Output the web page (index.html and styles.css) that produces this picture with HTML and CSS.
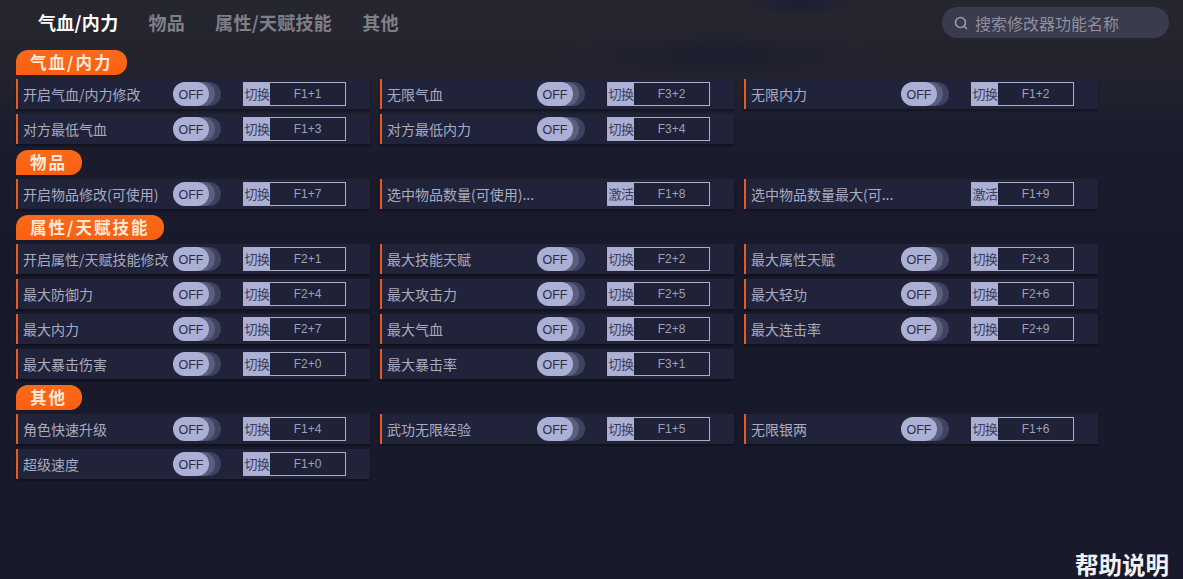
FILE: index.html
```html
<!DOCTYPE html>
<html lang="en">
<head>
    <meta charset="UTF-8">
    <title>修改器</title>
    <link rel="stylesheet" href="styles.css">
</head>
<body>
    <div class="backdrop"></div>

    <div class="topbar">
        <div class="tabs">
            <div class="tab active">气血/内力</div>
            <div class="tab">物品</div>
            <div class="tab">属性/天赋技能</div>
            <div class="tab">其他</div>
        </div>
        <div class="search">
            <svg class="search-icon" width="16" height="16" viewBox="0 0 16 16">
                <circle cx="7.5" cy="7.5" r="5" fill="none" stroke="#9a9cab" stroke-width="1.6"/>
                <path d="M11.2 11.2L13.5 13.5" stroke="#9a9cab" stroke-width="1.6" stroke-linecap="round"/>
            </svg>
            <span>搜索修改器功能名称</span>
        </div>
    </div>

    <div class="content">
        <div class="section-title">气血/内力</div>
        <div class="grid">
            <div class="row"><span class="name">开启气血/内力修改</span><div class="toggle"><div class="knob">OFF</div></div><div class="key"><span class="key-type">切换</span><span class="key-value">F1+1</span></div></div>
            <div class="row"><span class="name">无限气血</span><div class="toggle"><div class="knob">OFF</div></div><div class="key"><span class="key-type">切换</span><span class="key-value">F3+2</span></div></div>
            <div class="row"><span class="name">无限内力</span><div class="toggle"><div class="knob">OFF</div></div><div class="key"><span class="key-type">切换</span><span class="key-value">F1+2</span></div></div>
            <div class="row"><span class="name">对方最低气血</span><div class="toggle"><div class="knob">OFF</div></div><div class="key"><span class="key-type">切换</span><span class="key-value">F1+3</span></div></div>
            <div class="row"><span class="name">对方最低内力</span><div class="toggle"><div class="knob">OFF</div></div><div class="key"><span class="key-type">切换</span><span class="key-value">F3+4</span></div></div>
        </div>

        <div class="section-title">物品</div>
        <div class="grid">
            <div class="row"><span class="name">开启物品修改(可使用)</span><div class="toggle"><div class="knob">OFF</div></div><div class="key"><span class="key-type">切换</span><span class="key-value">F1+7</span></div></div>
            <div class="row"><span class="name wide">选中物品数量(可使用)...</span><div class="key"><span class="key-type">激活</span><span class="key-value">F1+8</span></div></div>
            <div class="row"><span class="name wide">选中物品数量最大(可...</span><div class="key"><span class="key-type">激活</span><span class="key-value">F1+9</span></div></div>
        </div>

        <div class="section-title">属性/天赋技能</div>
        <div class="grid">
            <div class="row"><span class="name">开启属性/天赋技能修改</span><div class="toggle"><div class="knob">OFF</div></div><div class="key"><span class="key-type">切换</span><span class="key-value">F2+1</span></div></div>
            <div class="row"><span class="name">最大技能天赋</span><div class="toggle"><div class="knob">OFF</div></div><div class="key"><span class="key-type">切换</span><span class="key-value">F2+2</span></div></div>
            <div class="row"><span class="name">最大属性天赋</span><div class="toggle"><div class="knob">OFF</div></div><div class="key"><span class="key-type">切换</span><span class="key-value">F2+3</span></div></div>
            <div class="row"><span class="name">最大防御力</span><div class="toggle"><div class="knob">OFF</div></div><div class="key"><span class="key-type">切换</span><span class="key-value">F2+4</span></div></div>
            <div class="row"><span class="name">最大攻击力</span><div class="toggle"><div class="knob">OFF</div></div><div class="key"><span class="key-type">切换</span><span class="key-value">F2+5</span></div></div>
            <div class="row"><span class="name">最大轻功</span><div class="toggle"><div class="knob">OFF</div></div><div class="key"><span class="key-type">切换</span><span class="key-value">F2+6</span></div></div>
            <div class="row"><span class="name">最大内力</span><div class="toggle"><div class="knob">OFF</div></div><div class="key"><span class="key-type">切换</span><span class="key-value">F2+7</span></div></div>
            <div class="row"><span class="name">最大气血</span><div class="toggle"><div class="knob">OFF</div></div><div class="key"><span class="key-type">切换</span><span class="key-value">F2+8</span></div></div>
            <div class="row"><span class="name">最大连击率</span><div class="toggle"><div class="knob">OFF</div></div><div class="key"><span class="key-type">切换</span><span class="key-value">F2+9</span></div></div>
            <div class="row"><span class="name">最大暴击伤害</span><div class="toggle"><div class="knob">OFF</div></div><div class="key"><span class="key-type">切换</span><span class="key-value">F2+0</span></div></div>
            <div class="row"><span class="name">最大暴击率</span><div class="toggle"><div class="knob">OFF</div></div><div class="key"><span class="key-type">切换</span><span class="key-value">F3+1</span></div></div>
        </div>

        <div class="section-title">其他</div>
        <div class="grid">
            <div class="row"><span class="name">角色快速升级</span><div class="toggle"><div class="knob">OFF</div></div><div class="key"><span class="key-type">切换</span><span class="key-value">F1+4</span></div></div>
            <div class="row"><span class="name">武功无限经验</span><div class="toggle"><div class="knob">OFF</div></div><div class="key"><span class="key-type">切换</span><span class="key-value">F1+5</span></div></div>
            <div class="row"><span class="name">无限银两</span><div class="toggle"><div class="knob">OFF</div></div><div class="key"><span class="key-type">切换</span><span class="key-value">F1+6</span></div></div>
            <div class="row"><span class="name">超级速度</span><div class="toggle"><div class="knob">OFF</div></div><div class="key"><span class="key-type">切换</span><span class="key-value">F1+0</span></div></div>
        </div>
    </div>

    <div class="help">帮助说明</div>
</body>
</html>
```

FILE: styles.css
```css
* {
    margin: 0;
    padding: 0;
    box-sizing: border-box;
}

body {
    position: relative;
    width: 1183px;
    height: 579px;
    overflow: hidden;
    background: #181a2b;
    font-family: "Noto Sans CJK SC", "Liberation Sans", sans-serif;
    color: #a9abc0;
}

/* faint artwork behind the top of the window */
.backdrop {
    position: absolute;
    top: 0;
    left: 0;
    width: 100%;
    height: 260px;
    background:
        radial-gradient(ellipse 170px 22px at 720px 55px, rgba(22, 26, 44, 0.6), transparent),
        radial-gradient(ellipse 60px 12px at 800px 4px, rgba(22, 24, 60, 0.6), transparent),
        linear-gradient(180deg, #26262f 0%, #24242f 25%, #1b1d2d 52%, #181a2b 100%);
}

.topbar {
    position: relative;
    height: 50px;
    padding: 7px 14px 0 38px;
    display: flex;
    justify-content: space-between;
    align-items: flex-start;
}

.tabs {
    display: flex;
    gap: 30px;
}

.tab {
    font-size: 18px;
    line-height: 30px;
    font-weight: 700;
    letter-spacing: 0.3px;
    color: #7f7f88;
}

.tab.active {
    color: #fff;
}

.search {
    width: 227px;
    height: 31px;
    border-radius: 16px;
    background: #3a3b4d;
    display: flex;
    align-items: center;
    gap: 6px;
    padding-left: 11px;
    font-size: 16px;
    color: #8f909e;
}

.content {
    position: relative;
    padding-left: 16px;
}

.section-title {
    width: fit-content;
    height: 25px;
    margin-bottom: 4px;
    padding: 0 15px 0 14px;
    background: linear-gradient(180deg, #f96a1c, #fb5f10);
    border-radius: 12px 12px 12px 0;
    font-size: 16.5px;
    line-height: 24px;
    font-weight: 700;
    letter-spacing: 2px;
    color: #ffe9dc;
}

.grid {
    display: grid;
    grid-template-columns: repeat(3, 354px);
    column-gap: 10px;
    row-gap: 5px;
    margin-bottom: 6px;
}

.row {
    height: 30px;
    display: flex;
    align-items: center;
    background: #20233a;
    border-left: 2px solid #e85a1e;
    box-shadow: 0 2px 2px rgba(0, 0, 0, 0.35);
    font-size: 14px;
}

.name {
    width: 155px;
    padding-left: 5px;
    white-space: nowrap;
    color: #a9abc0;
}

.name.wide {
    width: 225px;
}

.toggle {
    width: 48px;
    height: 24px;
    margin-right: 22px;
    border-radius: 12px;
    background: #3f4260;
}

.knob {
    width: 36px;
    height: 24px;
    border-radius: 12px;
    background: #acb0d4;
    box-shadow: 6px 0 0 #5b5f7e;
    color: #2a2c48;
    font-family: "Liberation Sans", sans-serif;
    font-size: 12.5px;
    line-height: 26px;
    text-align: center;
}

.key {
    width: 103px;
    height: 24px;
    display: flex;
    border: 1px solid #a9adc8;
    font-size: 13px;
    line-height: 21px;
}

.key-type {
    width: 26px;
    background: #acb0d4;
    color: #3a3c58;
    text-align: center;
    white-space: nowrap;
    letter-spacing: -0.5px;
}

.key-value {
    flex: 1;
    background: #1f2136;
    font-family: "Liberation Sans", sans-serif;
    font-size: 12px;
    line-height: 22px;
    text-align: center;
    color: #9da0b8;
}

.help {
    position: absolute;
    right: 14px;
    bottom: 1px;
    width: 94px;
    font-size: 23.5px;
    line-height: 28px;
    font-weight: 700;
    white-space: nowrap;
    color: #f2f2f6;
}
```
